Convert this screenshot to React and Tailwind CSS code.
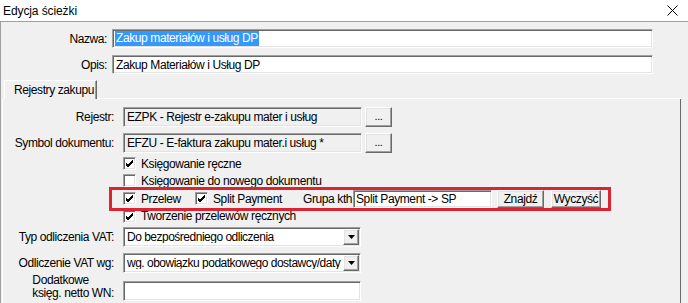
const sunken =
  'border border-t-[#a0a0a0] border-l-[#a0a0a0] border-r-white border-b-white shadow-[inset_1px_1px_0_#696969,inset_-1px_-1px_0_#e3e3e3]';
const raised =
  'border border-t-white border-l-white border-r-[#696969] border-b-[#696969] shadow-[inset_-1px_-1px_0_#a0a0a0,inset_1px_1px_0_#e3e3e3] bg-[#f0f0f0]';

function CheckBox({ checked }) {
  return (
    <div className={`w-[13px] h-[13px] shrink-0 bg-white ${sunken} flex items-center justify-center`}>
      {checked && (
        <svg width="9" height="9" viewBox="0 0 9 9">
          <path d="M1 4 L3 6 L8 1 M1 5 L3 7 L8 2 M1 6 L3 8 L8 3" stroke="#000" strokeWidth="1" fill="none" />
        </svg>
      )}
    </div>
  )
}

function Field({ label, children, h = 'h-[20px]' }) {
  return (
    <div className={`flex items-center ${h}`}>
      <div className="w-[112px] text-right pr-[1px] whitespace-nowrap">{label}</div>
      <div className="ml-[8px] flex items-center">{children}</div>
    </div>
  )
}

function Select({ value }) {
  return (
    <div className={`w-[238px] h-[20px] bg-white ${sunken} flex items-center pl-[3px]`}>
      <span className="flex-1 whitespace-nowrap overflow-hidden tracking-[-0.5px]">{value}</span>
      <div className={`w-[16px] h-[16px] mr-[1px] shrink-0 ${raised} flex items-center justify-center`}>
        <svg width="7" height="4" viewBox="0 0 7 4">
          <path d="M0 0 H7 L3.5 4 Z" fill="#000" />
        </svg>
      </div>
    </div>
  )
}

export default function App() {
  return (
    <div className="w-[688px] h-[303px] overflow-hidden relative bg-[#f0f0f0] text-black text-[12px] tracking-[-0.4px] leading-none whitespace-nowrap [font-family:'Liberation_Sans',Arial,sans-serif]">
      {/* title bar */}
      <div className="h-[22px] bg-white border-b border-[#a0a0a0] flex items-center justify-between pl-[3px] pr-[10px]">
        <span className="text-[12px] tracking-[-0.1px]">Edycja ścieżki</span>
        <svg width="11" height="11" viewBox="0 0 11 11">
          <path d="M0.5 0.5 L10.5 10.5 M10.5 0.5 L0.5 10.5" stroke="#000" strokeWidth="1" />
        </svg>
      </div>

      <div className="border-l border-[#a0a0a0] h-[281px] flex flex-col pt-[7px]">
        <div className="flex items-center h-[19px]">
          <div className="w-[106px] text-right">Nazwa:</div>
          <div className={`ml-[5px] w-[541px] h-[19px] bg-white ${sunken} flex items-center pl-[2px]`}>
            <span className="bg-[#3399ff] text-white px-[1px] leading-[15px]">Zakup materiałów i usług DP</span>
          </div>
        </div>
        <div className="flex items-center h-[19px] mt-[7px]">
          <div className="w-[106px] text-right">Opis:</div>
          <div className={`ml-[5px] w-[541px] h-[19px] bg-white ${sunken} flex items-center pl-[3px]`}>
            Zakup Materiałów i Usług DP
          </div>
        </div>

        {/* tabs */}
        <div className="mt-[6px] flex pl-[3px]">
          <div className="h-[19px] w-[93px] border-t border-l border-white border-r border-r-[#696969] shadow-[inset_-1px_0_0_#a0a0a0] flex items-center pl-[9px]">
            Rejestry zakupu
          </div>
          <div className="flex-1 border-b border-white mr-[7px]" />
        </div>

        <div className="flex-1 ml-[1px] mr-[7px] border-l border-white border-r border-r-[#696969] flex flex-col pt-[8px]">
          <Field label="Rejestr:">
            <div className={`w-[239px] h-[20px] ${sunken} flex items-center pl-[3px]`}>
              EZPK - Rejestr e-zakupu mater i usług
            </div>
            <button className={`ml-[3px] w-[27px] h-[20px] ${raised} text-[11px] pb-[2px]`}>...</button>
          </Field>
          <div className="mt-[6px]">
            <Field label="Symbol dokumentu:">
              <div className={`w-[239px] h-[20px] ${sunken} flex items-center pl-[3px]`}>
                EFZU - E-faktura zakupu mater.i usług *
              </div>
              <button className={`ml-[3px] w-[27px] h-[20px] ${raised} text-[11px] pb-[2px]`}>...</button>
            </Field>
          </div>

          <div className="mt-[2px] h-[17px] flex items-center pl-[120px]">
            <CheckBox checked />
            <span className="ml-[5px]">Księgowanie ręczne</span>
          </div>
          <div className="h-[17px] flex items-center pl-[120px]">
            <CheckBox />
            <span className="ml-[5px]">Księgowanie do nowego dokumentu</span>
          </div>
          <div className="h-[19px] flex items-center pl-[120px]">
            <div className="w-[72px] flex items-center">
              <CheckBox checked />
              <span className="ml-[5px]">Przelew</span>
            </div>
            <div className="w-[108px] flex items-center">
              <CheckBox checked />
              <span className="ml-[5px]">Split Payment</span>
            </div>
            <span className="w-[50px]">Grupa kth</span>
            <div className={`w-[139px] h-[18px] bg-white ${sunken} flex items-center pl-[2px]`}>
              Split Payment -&gt; SP
            </div>
            <button className={`ml-[5px] w-[47px] h-[18px] ${raised}`}>Znajdź</button>
            <button className={`ml-[7px] w-[50px] h-[18px] ${raised}`}>Wyczyść</button>
          </div>
          <div className="h-[16px] flex items-center pl-[120px]">
            <CheckBox checked />
            <span className="ml-[5px]">Tworzenie przelewów ręcznych</span>
          </div>

          <div className="mt-[3px]">
            <Field label="Typ odliczenia VAT:">
              <Select value="Do bezpośredniego odliczenia" />
            </Field>
          </div>
          <div className="mt-[6px]">
            <Field label="Odliczenie VAT wg:">
              <Select value="wg. obowiązku podatkowego dostawcy/daty" />
            </Field>
          </div>
          <div className="flex items-end mt-[1px]">
            <div className="w-[112px] flex justify-end pr-[1px]">
              <div className="leading-[13px] pb-[1px]">
                <div>Dodatkowe</div>
                <div>księg. netto WN:</div>
              </div>
            </div>
            <div className={`ml-[8px] w-[238px] h-[20px] bg-white ${sunken}`} />
          </div>
        </div>
      </div>

      {/* red highlight annotation */}
      <div className="absolute left-[109px] top-[187px] w-[502px] h-[24px] border-[3px] border-[#dc2430]" />
    </div>
  )
}
